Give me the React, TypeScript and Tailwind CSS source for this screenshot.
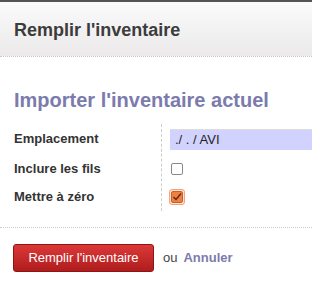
import React from "react";

export default function App() {
  return (
    <div className="w-[312px] h-[286px] bg-white overflow-hidden" style={{ fontFamily: '"Liberation Sans", Arial, sans-serif' }}>
      <div className="h-[2px] bg-[#555]" />
      <div className="h-[55px] bg-gradient-to-b from-[#fbfbfb] to-[#ebe9e9] border-b border-dotted border-[#c8c8c8] flex items-center px-[14px]">
        <span className="text-[18px] font-bold text-[#3c3c3c] mt-[2px]">Remplir l'inventaire</span>
      </div>
      <div className="px-[14px] pt-[32px]">
        <div className="text-[20px] font-bold text-[#7c7bad] leading-[22px]">Importer l'inventaire actuel</div>
        <div className="mt-[13px] grid grid-cols-[147px_1fr]">
          <div className="flex flex-col text-[13px] font-bold text-[#333]">
            <div className="h-[30px] flex items-center">Emplacement</div>
            <div className="h-[29px] flex items-center">Inclure les fils</div>
            <div className="h-[28px] flex items-center">Mettre à zéro</div>
          </div>
          <div className="border-l border-dashed border-[#ccc] pl-[8px] -mr-[14px] flex flex-col">
            <div className="h-[30px] flex items-center">
              <div className="h-[21px] w-full bg-[#d2d2ff] border-t border-[#ddd] flex items-center pl-[5px] text-[13px] text-[#222]">
                ./ . / AVI
              </div>
            </div>
            <div className="h-[29px] flex items-center pl-[1px]">
              <div className="w-[12px] h-[12px] border border-[#888] rounded-[2px] bg-white" />
            </div>
            <div className="h-[28px] flex items-center -ml-[1px]">
              <div className="w-[16px] h-[16px] rounded-[3px] border border-[#f5a27a] bg-[#fde3d5] flex items-center justify-center">
                <div className="w-[12px] h-[12px] rounded-[2px] bg-[#f08040] border border-[#c9602a] flex items-center justify-center">
                  <svg width="10" height="10" viewBox="0 0 10 10">
                    <path d="M1.5 5 L4 7.5 L9 1.5" stroke="#5a2a10" strokeWidth="1.4" fill="none" />
                  </svg>
                </div>
              </div>
            </div>
          </div>
        </div>
      </div>
      <div className="mt-[16px] border-t border-dotted border-[#ccc] px-[13px] pt-[16px] flex items-center">
        <button className="h-[28px] w-[141px] rounded-[3px] bg-gradient-to-b from-[#dc3838] to-[#b01c1c] border border-[#8d1414] text-white text-[13px]">
          Remplir l'inventaire
        </button>
        <span className="ml-[9px] text-[13px] text-[#444]">ou</span>
        <span className="ml-[6px] text-[13px] font-bold text-[#7c7bad]">Annuler</span>
      </div>
    </div>
  );
}
